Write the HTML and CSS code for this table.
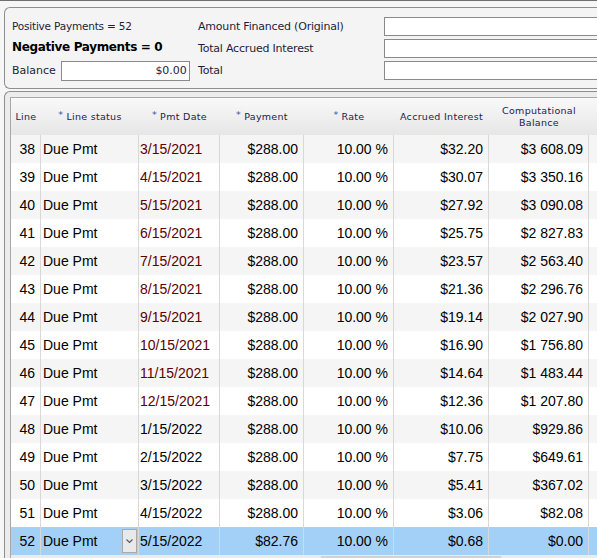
FILE: index.html
```html
<!DOCTYPE html>
<html>
<head>
<meta charset="utf-8">
<link rel="stylesheet" href="styles.css">
</head>
<body>
<div class="page">
  <div class="topline"></div>
  <div class="summary">
    <div class="lbl-pos">Positive Payments = 52</div>
    <div class="lbl">Amount Financed (Original)</div>
    <div class="box"></div>
    <div class="lbl-neg">Negative Payments = 0</div>
    <div class="lbl">Total Accrued Interest</div>
    <div class="box"></div>
    <div class="bal"><span>Balance</span><div class="bal-box">$0.00</div></div>
    <div class="lbl">Total</div>
    <div class="box"></div>
  </div>
  <div class="grid-panel">
    <div class="grid-inner">
      <div class="hdr">
        <div class="hc">Line</div>
        <div class="hc"><span class="req">*</span> Line status</div>
        <div class="hc"><span class="req">*</span> Pmt Date</div>
        <div class="hc"><span class="req">*</span> Payment</div>
        <div class="hc"><span class="req">*</span> Rate</div>
        <div class="hc">Accrued Interest</div>
        <div class="hc">Computational<br>Balance</div>
        <div class="hc"></div>
      </div>
      <div class="row even"><div class="c num">38</div><div class="c st">Due Pmt</div><div class="c dt past">3/15/2021</div><div class="c r">$288.00</div><div class="c r">10.00 %</div><div class="c r">$32.20</div><div class="c r">$3 608.09</div><div class="c"></div></div>
      <div class="row"><div class="c num">39</div><div class="c st">Due Pmt</div><div class="c dt past">4/15/2021</div><div class="c r">$288.00</div><div class="c r">10.00 %</div><div class="c r">$30.07</div><div class="c r">$3 350.16</div><div class="c"></div></div>
      <div class="row even"><div class="c num">40</div><div class="c st">Due Pmt</div><div class="c dt past">5/15/2021</div><div class="c r">$288.00</div><div class="c r">10.00 %</div><div class="c r">$27.92</div><div class="c r">$3 090.08</div><div class="c"></div></div>
      <div class="row"><div class="c num">41</div><div class="c st">Due Pmt</div><div class="c dt past">6/15/2021</div><div class="c r">$288.00</div><div class="c r">10.00 %</div><div class="c r">$25.75</div><div class="c r">$2 827.83</div><div class="c"></div></div>
      <div class="row even"><div class="c num">42</div><div class="c st">Due Pmt</div><div class="c dt past">7/15/2021</div><div class="c r">$288.00</div><div class="c r">10.00 %</div><div class="c r">$23.57</div><div class="c r">$2 563.40</div><div class="c"></div></div>
      <div class="row"><div class="c num">43</div><div class="c st">Due Pmt</div><div class="c dt past">8/15/2021</div><div class="c r">$288.00</div><div class="c r">10.00 %</div><div class="c r">$21.36</div><div class="c r">$2 296.76</div><div class="c"></div></div>
      <div class="row even"><div class="c num">44</div><div class="c st">Due Pmt</div><div class="c dt past">9/15/2021</div><div class="c r">$288.00</div><div class="c r">10.00 %</div><div class="c r">$19.14</div><div class="c r">$2 027.90</div><div class="c"></div></div>
      <div class="row"><div class="c num">45</div><div class="c st">Due Pmt</div><div class="c dt past">10/15/2021</div><div class="c r">$288.00</div><div class="c r">10.00 %</div><div class="c r">$16.90</div><div class="c r">$1 756.80</div><div class="c"></div></div>
      <div class="row even"><div class="c num">46</div><div class="c st">Due Pmt</div><div class="c dt past">11/15/2021</div><div class="c r">$288.00</div><div class="c r">10.00 %</div><div class="c r">$14.64</div><div class="c r">$1 483.44</div><div class="c"></div></div>
      <div class="row"><div class="c num">47</div><div class="c st">Due Pmt</div><div class="c dt past">12/15/2021</div><div class="c r">$288.00</div><div class="c r">10.00 %</div><div class="c r">$12.36</div><div class="c r">$1 207.80</div><div class="c"></div></div>
      <div class="row even"><div class="c num">48</div><div class="c st">Due Pmt</div><div class="c dt">1/15/2022</div><div class="c r">$288.00</div><div class="c r">10.00 %</div><div class="c r">$10.06</div><div class="c r">$929.86</div><div class="c"></div></div>
      <div class="row"><div class="c num">49</div><div class="c st">Due Pmt</div><div class="c dt">2/15/2022</div><div class="c r">$288.00</div><div class="c r">10.00 %</div><div class="c r">$7.75</div><div class="c r">$649.61</div><div class="c"></div></div>
      <div class="row even"><div class="c num">50</div><div class="c st">Due Pmt</div><div class="c dt">3/15/2022</div><div class="c r">$288.00</div><div class="c r">10.00 %</div><div class="c r">$5.41</div><div class="c r">$367.02</div><div class="c"></div></div>
      <div class="row"><div class="c num">51</div><div class="c st">Due Pmt</div><div class="c dt">4/15/2022</div><div class="c r">$288.00</div><div class="c r">10.00 %</div><div class="c r">$3.06</div><div class="c r">$82.08</div><div class="c"></div></div>
      <div class="row sel"><div class="c num">52</div><div class="c st"><span>Due Pmt</span><span class="dd"><svg width="9" height="6" viewBox="0 0 9 6"><path d="M1.5 1.5 L4.5 4.5 L7.5 1.5" fill="none" stroke="#555" stroke-width="1.1"/></svg></span></div><div class="c dt">5/15/2022</div><div class="c r">$82.76</div><div class="c r">10.00 %</div><div class="c r">$0.68</div><div class="c r">$0.00</div><div class="c"></div></div>
      <div class="foot"><div class="thumb"></div></div>
    </div>
  </div>
</div>
</body>
</html>
```

FILE: styles.css
```css
html, body {
  margin: 0;
  padding: 0;
  background: #f6f6f6;
  overflow: hidden;
}
.page {
  width: 680px;
  font-family: "DejaVu Sans", Verdana, sans-serif;
}
.topline {
  height: 1px;
  background: #6f6f6f;
}
.summary {
  margin: 6px 0 0 4px;
  border: 1px solid #8e8e8e;
  border-right: none;
  border-radius: 6px 0 0 6px;
  background: #f4f4f4;
  padding: 9px 0 8px 7px;
  display: grid;
  grid-template-columns: 186px 186px 300px;
  grid-template-rows: 19px 19px 19px;
  row-gap: 3px;
  font-size: 11px;
  color: #1e1e38;
}
.lbl-pos, .lbl {
  display: flex;
  align-items: center;
  white-space: nowrap;
  letter-spacing: -0.2px;
}
.lbl-pos {
  font-size: 10.5px;
  margin-top: -2px;
}
.lbl-neg {
  display: flex;
  align-items: center;
  font-weight: bold;
  font-size: 12px;
  color: #000;
  white-space: nowrap;
  letter-spacing: -0.35px;
  margin-top: -3px;
}
.box {
  background: #fff;
  border: 1px solid #8a8a8a;
  box-sizing: border-box;
  height: 19px;
}
.bal {
  display: flex;
  align-items: center;
  gap: 5px;
}
.bal-box {
  width: 129px;
  height: 20px;
  box-sizing: border-box;
  border: 1px solid #8a8a8a;
  background: #fff;
  text-align: right;
  padding: 2px 2px 0 0;
  font-size: 11px;
  color: #1e1e38;
}
.grid-panel {
  margin: 2px 0 0 4px;
  border: 1px solid #8e8e8e;
  border-right: none;
  border-bottom: none;
  border-radius: 6px 0 0 0;
  background: #ececec;
  padding: 5px 0 0 5px;
}
.grid-inner {
  border: 1px solid #a8a8a8;
  border-right: none;
  border-bottom: none;
  background: #fff;
}
.hdr, .row {
  display: grid;
  grid-template-columns: 30px 98px 81px 84px 90px 95px 100px 100px;
}
.hdr {
  height: 37px;
  background: linear-gradient(#f9f9f9, #e6e6e6);
  font-size: 9.5px;
  color: #22224e;
  letter-spacing: 0.3px;
}
.hc {
  display: flex;
  align-items: center;
  justify-content: center;
  text-align: center;
  line-height: 12px;
  padding-top: 1px;
  white-space: nowrap;
}
.req {
  color: #3a52a8;
  margin-right: 3px;
  position: relative;
  top: -2px;
}
.row {
  height: 28px;
  font-family: "Liberation Sans", Arial, sans-serif;
  font-size: 14px;
  color: #000;
  background: #fff;
}
.row.even { background: #f5f5f5; }
.row.sel { background: #a3d0f7; }
.c {
  border-right: 1px solid #d8d8d8;
  box-sizing: border-box;
  display: flex;
  align-items: center;
  white-space: nowrap;
  overflow: hidden;
}
.c.num { justify-content: flex-end; padding-right: 5px; }
.c.st { padding-left: 2px; justify-content: space-between; }
.c.dt { padding-left: 1px; }
.c.dt.past { color: #5c0000; }
.c.r { justify-content: flex-end; padding-right: 5px; }
.dd {
  width: 15px;
  height: 24px;
  box-sizing: border-box;
  border: 1px solid #a9a9a9;
  background: #e9e9e9;
  margin-right: 1px;
  display: flex;
  align-items: center;
  justify-content: center;
}
.foot {
  height: 10px;
  background: #ebebeb;
  position: relative;
}
.thumb {
  position: absolute;
  left: 310px;
  top: 1px;
  width: 180px;
  height: 2px;
  background: #d2d2d2;
}
```
